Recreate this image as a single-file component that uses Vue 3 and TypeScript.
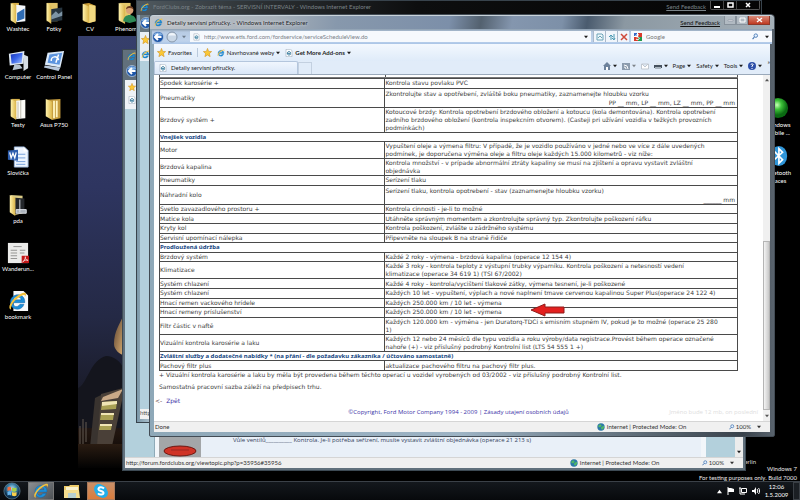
<script setup lang="ts">
interface Row {
  kind: 'single' | 'double' | 'measure' | 'triple' | 'section'
  name: string
  text?: string
  extra?: string
}

interface Shortcut {
  icon: string
  label: string
}

const rows: Row[] = [
  { kind: 'single', name: 'Spodek karosérie +', text: 'Kontrola stavu povlaku PVC' },
  {
    kind: 'measure',
    name: 'Pneumatiky',
    text: 'Zkontrolujte stav a opotřebení, zvláště boku pneumatiky, zaznamenejte hloubku vzorku',
    extra: 'PP __ mm, LP __ mm, LZ __ mm, PP __ mm',
  },
  {
    kind: 'triple',
    name: 'Brzdový systém +',
    text: 'Kotoucové brzdy: Kontrola opotrebení brzdového obložení a kotoucu (kola demontována). Kontrola opotrebení\nzadního brzdového obložení (kontrola inspekcním otvorem). (Casteji pri užívání vozidla v težkých provozních\npodmínkách)',
  },
  { kind: 'section', name: 'Vnejšek vozidla' },
  {
    kind: 'double',
    name: 'Motor',
    text: 'Vypuštení oleje a výmena filtru: V případě, že je vozidlo používáno v jedné nebo ve více z dále uvedených\npodmínek, je doporučena výměna oleje a filtru oleje každých 15.000 kilometrů - viz níže:',
  },
  {
    kind: 'double',
    name: 'Brzdová kapalina',
    text: 'Kontrola množství - v prípade abnormální ztráty kapaliny se musí na zjištení a opravu vystavit zvláštní\nobjednávka',
  },
  { kind: 'single', name: 'Pneumatiky', text: 'Serízení tlaku' },
  {
    kind: 'measure',
    name: 'Náhradní kolo',
    text: 'Serízení tlaku, kontrola opotrebení - stav (zaznamenejte hloubku vzorku)',
    extra: '______ mm',
  },
  { kind: 'single', name: 'Svetlo zavazadlového prostoru +', text: 'Kontrola cinnosti - je-li to možné' },
  { kind: 'single', name: 'Matice kola', text: 'Utáhněte správným momentem a zkontrolujte správný typ. Zkontrolujte poškození ráfku' },
  { kind: 'single', name: 'Kryty kol', text: 'Kontrola poškození, zvlášte u zádržného systému' },
  { kind: 'single', name: 'Servisní upomínací nálepka', text: 'Připevněte na sloupek B na straně řidiče' },
  { kind: 'section', name: 'Prodloužená údržba' },
  { kind: 'single', name: 'Brzdový systém', text: 'Každé 2 roky - výmena - brzdová kapalina (operace 12 154 4)' },
  {
    kind: 'double',
    name: 'Klimatizace',
    text: 'Každé 3 roky - kontrola teploty z výstupní trubky výparníku. Kontrola poškození a netesností vedení\nklimatizace (operace 34 619 1) (TSI 67/2002)',
  },
  { kind: 'single', name: 'Systém chlazení', text: 'Každé 4 roky - kontrola/vycištení tlakové zátky, výmena tesnení, je-li poškozené' },
  { kind: 'single', name: 'Systém chlazení', text: 'Každých 10 let - vypuštení, výplach a nové naplnení tmave cervenou kapalinou Super Plus(operace 24 122 4)' },
  { kind: 'single', name: 'Hnací remen vackového hrídele', text: 'Každých 250.000 km / 10 let - výmena' },
  { kind: 'single', name: 'Hnací remeny príslušenství', text: 'Každých 250.000 km / 10 let - výmena' },
  {
    kind: 'double',
    name: 'Filtr částic v naftě',
    text: 'Každých 120.000 km - výměna - jen Duratorq-TDCi s emisním stupněm IV, pokud je to možné (operace 25 280\n1)',
  },
  {
    kind: 'double',
    name: 'Vizuální kontrola karosérie a laku',
    text: 'Každých 12 nebo 24 měsíců dle typu vozidla a roku výroby/data registrace.Provést během operace označené\nnahoře (+) - viz příslušný podrobný Kontrolní list (LTS 54 555 1 +)',
  },
  { kind: 'section', name: 'Zvláštní služby a dodatečné nabídky * (na přání - dle požadavku zákazníka / účtováno samostatně)' },
  { kind: 'single', name: 'Pachový filtr plus', text: 'aktualizace pachového filtru na pachový filtr plus.' },
]

const shortcuts: Shortcut[][] = [
  [
    { icon: 'folder-doc', label: 'Washtec' },
    { icon: 'computer', label: 'Computer' },
    { icon: 'folder-paper', label: 'Testy' },
    { icon: 'word', label: 'Slovíčka' },
    { icon: 'folder-dark', label: 'pda' },
    { icon: 'pdf', label: 'Wanderun...' },
    { icon: 'iedoc', label: 'bookmark' },
  ],
  [
    { icon: 'folder-photo', label: 'Fotky' },
    { icon: 'panel', label: 'Control Panel' },
    { icon: 'folder-full', label: 'Asus P750' },
  ],
  [{ icon: 'folder', label: 'CV' }],
  [{ icon: 'folder-user', label: 'Phenom' }],
]

const menus: string[] = ['Page', 'Safety', 'Tools']
</script>

<template>
  <div class="desktop">
    <svg class="defs" width="0" height="0" aria-hidden="true">
      <defs>
        <linearGradient id="gFolder" x1="0" x2="1">
          <stop offset="0" stop-color="#fff3ad" />
          <stop offset="1" stop-color="#dbb54a" />
        </linearGradient>
        <linearGradient id="gScreen" x1="0" y1="0" x2="1" y2="1">
          <stop offset="0" stop-color="#1430b8" />
          <stop offset="0.5" stop-color="#3c68ea" />
          <stop offset="1" stop-color="#a9c8ff" />
        </linearGradient>
        <radialGradient id="gBall" cx="0.45" cy="0.35">
          <stop offset="0" stop-color="#c8ffb8" />
          <stop offset="0.45" stop-color="#3ec23a" />
          <stop offset="1" stop-color="#0a6a12" />
        </radialGradient>
        <radialGradient id="gOrb" cx="0.5" cy="0.35">
          <stop offset="0" stop-color="#b9e2f5" />
          <stop offset="0.55" stop-color="#3c7fa8" />
          <stop offset="1" stop-color="#0d2f4c" />
        </radialGradient>
      </defs>
      <symbol id="folder" viewBox="0 0 24 24">
        <path d="M5 2l6-1 7 3v17l-7 2-6-2z" fill="#c99c36" />
        <path d="M11 3l7 1v17l-7 2z" fill="#f1d981" />
        <path d="M4 2l7 3v18l-7-3z" fill="url(#gFolder)" />
      </symbol>
      <symbol id="folder-doc" viewBox="0 0 24 24">
        <path d="M5 1h8v20H5z" fill="#d8b24c" />
        <path d="M10 3l10 1v17l-10 1z" fill="#f5f8fc" />
        <path d="M11 12l8-5v11l-8 3z" fill="#2f6cb4" />
        <path d="M4 1l6 3v20l-6-4z" fill="url(#gFolder)" />
      </symbol>
      <symbol id="folder-photo" viewBox="0 0 24 24">
        <path d="M4 1h12v20H4z" fill="#e2c468" />
        <path d="M8 8l13-2v14L8 22z" fill="#26343f" />
        <path d="M9 15l5-5 3 3 4-3v5l-12 4z" fill="#7d94a5" />
        <path d="M4 1l5 3v20l-5-4z" fill="url(#gFolder)" />
      </symbol>
      <symbol id="folder-user" viewBox="0 0 24 24">
        <path d="M5 1h12v20H5z" fill="#e5c86b" />
        <path d="M4 1l7 3v20l-7-4z" fill="url(#gFolder)" />
        <circle cx="16" cy="9" r="4" fill="#dba277" />
        <path d="M12 8c0-5 8-5 8 0-3-2-5-2-8 0z" fill="#6b3d20" />
        <path d="M9 21c0-9 14-9 14 0l-7 2z" fill="#2f8a56" />
      </symbol>
      <symbol id="folder-paper" viewBox="0 0 24 24">
        <path d="M5 1h9v20H5z" fill="#d8b24c" />
        <path d="M10 3l10-1v20l-10 1z" fill="#fbfbf7" />
        <path d="M15 3v19M12 4v18" stroke="#b9b6a8" stroke-width="1" />
        <path d="M4 1l6 3v20l-6-4z" fill="url(#gFolder)" />
      </symbol>
      <symbol id="folder-full" viewBox="0 0 24 24">
        <path d="M4 2l15-1v21l-9 2z" fill="#c39a3d" />
        <path d="M12 3v19M15 3v18" stroke="#fff4c0" stroke-width="2" />
        <path d="M3 1l7 3v20l-7-4z" fill="url(#gFolder)" />
      </symbol>
      <symbol id="folder-dark" viewBox="0 0 24 24">
        <path d="M4 1l13 1v19l-8 2z" fill="#d9ca86" />
        <path d="M9 4l10 1v15l-10 2z" fill="#23262a" />
        <path d="M14 6v14M10 17h11v4H10z" stroke="#dfe4ea" fill="#aab1ba" />
        <path d="M3 1l6 3v20l-6-4z" fill="url(#gFolder)" />
      </symbol>
      <symbol id="computer" viewBox="0 0 24 24">
        <path d="M18 5l5 2v13l-5 3z" fill="#d5dde4" />
        <path d="M2 4l17-3-1 14-15 2z" fill="#dfe9f3" />
        <path d="M4 5l13-2-1 11-11 1z" fill="url(#gScreen)" />
        <path d="M8 16h6l3 4-11 2z" fill="#b5c3d1" />
      </symbol>
      <symbol id="panel" viewBox="0 0 24 24">
        <path d="M5 3l18-2-4 18-17-3z" fill="#dbe9f8" />
        <path d="M7 5l14-2-3 13-13-2z" fill="#5c94df" />
        <path d="M9 12a4 4 0 0 1 8-1M17 5l-3 9" stroke="#fff" stroke-width="1.6" fill="none" />
        <path d="M2 17l17 2-2 4-16-4z" fill="#b8c8dc" />
      </symbol>
      <symbol id="word" viewBox="0 0 24 24">
        <path d="M8 1h11l4 4v18H8z" fill="#edf5ff" stroke="#9bb6da" />
        <path d="M18 1v5h5z" fill="#fff" />
        <path d="M12 9h8M12 13h8M10 17h10M10 20h10" stroke="#6e9bd8" />
        <path d="M1 5l11-1v12L1 15z" fill="#2e5eae" />
        <path d="M3 7l1.500 6 2-5 2 5 1.500-6" stroke="#fff" stroke-width="1.400" fill="none" />
      </symbol>
      <symbol id="pdf" viewBox="0 0 24 24">
        <path d="M1 1h22v22H1z" fill="#ececea" />
        <path d="M7 5h9M4 9h7M14 9h6M4 12h7M14 12h5M4 15h7M4 18h7" stroke="#8d8d8b" />
        <path d="M16 15h8v8h-8z" fill="#c41818" />
        <path d="M17 22c3-3 3-5 3-6 0 3 1 4 3 4-3-1-4 0-6 2z" stroke="#fff" stroke-width="0.700" fill="none" />
      </symbol>
      <symbol id="ie" viewBox="0 0 24 24">
        <path d="M20 15.500h-5c-3 5-9 3-8.500-2H21C22 0 3 1 3 13c0 10 14 12 17 2.500zM7 10c1-5 9-5 9.500 0z" fill="#1d8fd8" stroke="#0c5da0" stroke-width="0.600" />
        <path d="M4 22C-2 21 5 8 15 3c8-4 9-1 6 4 1-4-1-4-6-1C8 10 3 17 4 22z" fill="#f3c13c" />
      </symbol>
      <symbol id="iedoc" viewBox="0 0 24 24">
        <path d="M7 1h11l5 5v17H7z" fill="#f7f9fb" />
        <use href="#ie" x="1" y="2" width="21" height="21" />
      </symbol>
      <symbol id="page-ie" viewBox="0 0 24 24">
        <path d="M3 1h14l4 4v18H3z" fill="#fff" stroke="#8b9aac" stroke-width="1.500" />
        <path d="M17 15c-2 5-10 4-10-2 0-7 10-7 10 0H7" stroke="#357a9c" stroke-width="3" fill="none" />
      </symbol>
      <symbol id="star" viewBox="0 0 24 24">
        <path d="M12 1l3 8 8 .5-6 5.500 2 8-7-4.500L5 23l2-8-6-5.500L9 9z" fill="#fbc935" stroke="#cf8e1c" stroke-width="1.500" />
      </symbol>
      <symbol id="globe" viewBox="0 0 24 24">
        <circle cx="12" cy="12" r="11" fill="#2b78a8" />
        <path d="M3 9l6-5 5 3-3 5-5 1zM13 12l7-4 2 5-6 7-4-3z" fill="#4fb766" />
      </symbol>
      <symbol id="lens" viewBox="0 0 24 24">
        <circle cx="13" cy="9" r="6" fill="#e4f1ff" stroke="#4777b2" stroke-width="3" />
        <path d="M8 14l-6 7" stroke="#4777b2" stroke-width="4" />
      </symbol>
      <symbol id="caret" viewBox="0 0 6 6">
        <path d="M0 1h6L3 5z" fill="currentColor" />
      </symbol>
      <symbol id="arrow-back" viewBox="0 0 24 24">
        <circle cx="12" cy="12" r="11" fill="#1d56a8" stroke="#b9cee6" stroke-width="1.500" />
        <path d="M3 8a10 10 0 0 1 18 0c-6 3-12 3-18 0z" fill="#7faee0" />
        <path d="M19 12H7M12 6l-6 6 6 6" stroke="#fff" stroke-width="4" fill="none" />
      </symbol>
    </svg>

    <svg class="wallpaper" viewBox="0 0 60 432" preserveAspectRatio="none" aria-hidden="true">
      <defs>
        <linearGradient id="gSky" x1="0" y1="0" x2="0" y2="1">
          <stop offset="0" stop-color="#363f6b" />
          <stop offset="0.35" stop-color="#2e3560" />
          <stop offset="0.65" stop-color="#242945" />
          <stop offset="0.85" stop-color="#191a26" />
          <stop offset="0.92" stop-color="#21150f" />
          <stop offset="1" stop-color="#020202" />
        </linearGradient>
        <linearGradient id="gLamp" x1="0" y1="0" x2="1" y2="1">
          <stop offset="0" stop-color="#5b4230" />
          <stop offset="1" stop-color="#d5aa70" />
        </linearGradient>
        <linearGradient id="gGround" x1="0" y1="0" x2="0" y2="1">
          <stop offset="0" stop-color="#2a1c12" />
          <stop offset="1" stop-color="#020202" />
        </linearGradient>
      </defs>
      <path d="M0 0h60v432H0z" fill="url(#gSky)" />
      <path d="M0 352c9-3 12-28 28-32 8 0 15 6 17 12v60H0z" fill="#14151d" />
      <path d="M45 280c-3 8-9 15-9 28 0 6 6 10 9 11z" fill="url(#gLamp)" />
      <path d="M17 362l6-3 2 32 0 20H12z" fill="#39332f" />
      <path d="M23 358l22-6v8l-11 50H19z" fill="#4a4038" />
      <path d="M25 361l20-8-5 9-17 3z" fill="#c9a987" />
      <path d="M24 366l15-1-1 8-15 1zM23 377l13 0-1 7H22zM22 388l12 0-1 6H21z" fill="#a9a054" />
      <path d="M24 366l15-1v3l-15 2zM23 377h13v2H23zM22 388h12v2H22z" fill="#f0e5b5" />
      <path d="M2 390v18M5 383v25M8 386v20" stroke="#625b53" stroke-width="1" />
      <path d="M0 408h60v24H0z" fill="url(#gGround)" />
    </svg>

    <nav class="shortcuts" aria-label="Desktop">
      <div v-for="(column, c) in shortcuts" :key="c" class="shortcut-column">
        <button v-for="s in column" :key="s.label" class="shortcut" type="button">
          <svg width="24" height="22"><use :href="'#' + s.icon" /></svg>
          <span>{{ s.label }}</span>
        </button>
      </div>
    </nav>

    <div class="side-shortcuts">
      <button class="shortcut" type="button">
        <svg width="22" height="24" viewBox="0 0 24 24"><circle cx="12" cy="12" r="11" fill="url(#gBall)" /></svg>
        <span>Windows<br />Mobile ...</span>
      </button>
      <button class="shortcut" type="button">
        <svg width="22" height="24" viewBox="0 0 24 24">
          <ellipse cx="13" cy="12" rx="9" ry="11" fill="#2f95d8" />
          <path d="M8 7l9 9-4 4V4l4 4-9 8" stroke="#fff" stroke-width="1.800" fill="none" />
        </svg>
        <span>Bluetooth<br />Places</span>
      </button>
    </div>

    <span class="covered-label">Berlin</span>

    <section class="window forum" aria-label="Forum">
      <div class="forum-title"><svg width="9" height="9"><use href="#ie" /></svg></div>
      <div class="forum-nav"><svg width="12" height="12"><use href="#arrow-back" /></svg></div>
      <div class="forum-tools">
        <svg width="8" height="8"><use href="#star" /></svg>
        <svg width="8" height="8"><use href="#page-ie" /></svg>
      </div>
      <div class="forum-body">
        <div class="forum-margin"></div>
        <div class="forum-avatar">
          <svg width="34" height="12" viewBox="0 0 34 12">
            <ellipse cx="17" cy="6" rx="16" ry="5" fill="#cf3326" stroke="#6d1812" />
            <path d="M8 5h18" stroke="#b52d24" stroke-width="2" />
          </svg>
        </div>
        <div class="forum-post">
          <p>Vůle ventilů__________ Kontrola. Je-li potřeba seřízení, musíte vystavit zvláštní objednávka (operace 21 213 s)</p>
        </div>
        <div class="forum-gutter"></div>
        <div class="forum-scroll"><svg width="4" height="4"><use href="#caret" /></svg></div>
      </div>
      <footer class="status">
        <span class="grow">http://forum.fordclubs.org/viewtopic.php?p=35956#35956</span>
        <span class="zone"><svg width="8" height="8"><use href="#globe" /></svg>Internet | Protected Mode: On</span>
        <span class="zoom"><svg width="6" height="6"><use href="#lens" /></svg>100%<svg class="drop" width="4" height="4"><use href="#caret" /></svg></span>
      </footer>
    </section>

    <section class="window clubs" aria-label="FordClubs">
      <header class="clubs-title">
        <svg width="9" height="9"><use href="#ie" /></svg>
        <span class="grow">FordClubs.org - Zobrazit téma - SERVISNÍ INTERVALY - Windows Internet Explorer</span>
        <a href="#">Send Feedback</a>
        <div class="clubs-buttons">
          <button type="button" aria-label="Minimize"><svg width="8" height="8" viewBox="0 0 8 8"><path d="M1 5h6v2H1z" fill="#fff" /></svg></button>
          <button type="button" aria-label="Maximize"><svg width="8" height="8" viewBox="0 0 8 8"><path d="M2 2h5v4H2z" fill="none" stroke="#fff" stroke-width="1.500" /></svg></button>
          <button type="button" aria-label="Close" class="wide"><svg width="8" height="8" viewBox="0 0 8 8"><path d="M2 2l4 4M6 2L2 6" stroke="#fff" stroke-width="1.500" /></svg></button>
        </div>
      </header>
      <div class="clubs-nav"><svg width="12" height="12"><use href="#arrow-back" /></svg></div>
      <div class="clubs-tools">
        <svg width="9" height="9"><use href="#star" /></svg>
        <svg width="9" height="9"><use href="#ie" /></svg>
      </div>
      <div class="clubs-body"></div>
      <footer class="clubs-status">http://</footer>
    </section>

    <section class="window main" aria-label="Detaily servisní příručky">
      <header class="titlebar">
        <svg width="9" height="9"><use href="#ie" /></svg>
        <h1 class="grow">Detaily servisní příručky. - Windows Internet Explorer</h1>
        <a href="#">Send Feedback</a>
        <div class="caption">
          <button type="button" aria-label="Minimize"><svg width="7" height="6" viewBox="0 0 7 6"><path d="M1 3h5v1H1z" fill="#fff" stroke="#7c8794" stroke-width="0.500" /></svg></button>
          <button type="button" aria-label="Maximize"><svg width="7" height="6" viewBox="0 0 7 6"><path d="M1 1h5v4H1z" fill="none" stroke="#fff" /></svg></button>
          <button type="button" aria-label="Close" class="close"><svg width="7" height="6" viewBox="0 0 7 6"><path d="M1 1l5 4M6 1L1 5" stroke="#fff" stroke-width="1.400" /></svg></button>
        </div>
      </header>

      <div class="nav">
        <button type="button" class="round" aria-label="Back"><svg width="12" height="12"><use href="#arrow-back" /></svg></button>
        <button type="button" class="round" aria-label="Forward">
          <svg width="12" height="12" viewBox="0 0 24 24"><circle cx="12" cy="12" r="10" fill="#c9d7e6" stroke="#8797aa" stroke-width="2" /><path d="M4 9a9 9 0 0 1 16 0z" fill="#f1f6fb" /></svg>
        </button>
        <svg class="recent" width="4" height="4"><use href="#caret" /></svg>
        <div class="address">
          <svg width="7" height="8"><use href="#page-ie" /></svg>
          <input type="text" aria-label="Address" value="http://www.etis.ford.com/fordservice/serviceScheduleView.do" />
          <svg width="4" height="4"><use href="#caret" /></svg>
        </div>
        <div class="nav-actions">
          <button type="button" aria-label="Compatibility view"><svg width="8" height="8" viewBox="0 0 8 8"><path d="M1 1h5l1 1v5H1z" fill="#eef7fb" stroke="#6da4b8" /><path d="M2 5l2-2 2 2" stroke="#6da4b8" fill="none" /></svg></button>
          <button type="button" aria-label="Refresh"><svg width="8" height="8" viewBox="0 0 8 8"><path d="M3 7V2M1 4l2-2 2 2M6 1v5M4 5l2 2 1-2" stroke="#4a99b2" fill="none" /></svg></button>
          <button type="button" aria-label="Stop"><svg width="8" height="8" viewBox="0 0 8 8"><path d="M1 1l6 6M7 1L1 7" stroke="#ce4a3b" stroke-width="1.500" /></svg></button>
        </div>
        <div class="search">
          <svg width="8" height="8" viewBox="0 0 8 8"><path d="M0 0h8v8H0z" fill="#fff" /><path d="M0 0h3v3H0z" fill="#3568c8" /><path d="M4 0h4v4H4z" fill="#d93a2b" /><path d="M0 4h4v4H0z" fill="#d93a2b" /><path d="M4 4h4v4H4z" fill="#219a4e" /><path d="M5 2c-4-2-4 3-1 2 3 1 0 4-2 2" stroke="#fff" fill="none" /></svg>
          <input type="text" aria-label="Search" placeholder="Google" />
          <button type="button" aria-label="Search Google"><svg width="7" height="7"><use href="#lens" /></svg></button>
          <svg width="4" height="4"><use href="#caret" /></svg>
        </div>
      </div>

      <div class="favorites">
        <button type="button"><svg width="9" height="9"><use href="#star" /></svg>Favorites</button>
        <span class="divider"></span>
        <button type="button" aria-label="Add to favorites"><svg width="9" height="9"><use href="#star" /></svg></button>
        <a href="#"><svg width="8" height="8"><use href="#ie" /></svg>Navrhované weby <svg width="4" height="4"><use href="#caret" /></svg></a>
        <a href="#" class="strong"><svg width="8" height="8"><use href="#page-ie" /></svg>Get More Add-ons <svg width="4" height="4"><use href="#caret" /></svg></a>
      </div>

      <div class="tabs">
        <button type="button" class="tab"><svg width="8" height="8"><use href="#page-ie" /></svg>Detaily servisní příručky.</button>
        <button type="button" class="new-tab" aria-label="New tab"></button>
        <div class="commands">
          <button type="button" aria-label="Home"><svg width="8" height="8" viewBox="0 0 8 8"><path d="M0 4l4-4 4 4H7v4H1V4z" fill="#6d829c" /><path d="M3 5h2v3H3z" fill="#fff" /></svg><svg width="4" height="4"><use href="#caret" /></svg></button>
          <button type="button" aria-label="Feeds"><svg width="8" height="8" viewBox="0 0 8 8"><path d="M0 1h8v7H0z" fill="#8c9cae" /><path d="M2 3a4 4 0 0 1 4 4M2 5a2 2 0 0 1 2 2" stroke="#fff" fill="none" /></svg><svg class="faint" width="4" height="4"><use href="#caret" /></svg></button>
          <button type="button" aria-label="Mail"><svg width="8" height="8" viewBox="0 0 8 8"><path d="M0.500 2h7v5h-7zM1 2l3 3 3-3" fill="#fff" stroke="#c1c8d0" /></svg></button>
          <button type="button" aria-label="Print"><svg width="8" height="8" viewBox="0 0 8 8"><path d="M2 1h4v2H2z" fill="#dce4ec" /><path d="M0 3h8v3H0z" fill="#46525f" /><path d="M1 5h6v2H1z" fill="#a9b4bf" /></svg><svg width="4" height="4"><use href="#caret" /></svg></button>
          <button v-for="m in menus" :key="m" type="button">{{ m }}<svg width="4" height="4"><use href="#caret" /></svg></button>
          <button type="button" aria-label="Help"><svg width="8" height="8" viewBox="0 0 8 8"><circle cx="4" cy="4" r="4" fill="#2d4fa8" /><path d="M3 3c0-2 3-1 2 0L4 4v1M4 6v1" stroke="#fff" fill="none" /></svg><svg width="4" height="4"><use href="#caret" /></svg></button>
          <span class="more">»</span>
        </div>
      </div>

      <div class="viewport">
        <article class="page">
          <div class="cut-row" aria-hidden="true"><span></span><span></span></div>
          <div class="table-area">
            <table>
              <colgroup><col class="name-col" /><col /></colgroup>
              <tbody>
                <tr v-for="(row, i) in rows" :key="i" :class="row.kind">
                  <th v-if="row.kind === 'section'" colspan="2">{{ row.name }}</th>
                  <template v-else>
                    <td>{{ row.name }}</td>
                    <td>
                      {{ row.text }}
                      <div v-if="row.extra" class="extra">{{ row.extra }}</div>
                    </td>
                  </template>
                </tr>
              </tbody>
            </table>
          </div>
          <p class="note">+ Vizuální kontrola karosérie a laku by měla být provedena během těchto operací u vozidel vyrobených od 03/2002 - viz příslušný podrobný Kontrolní list.</p>
          <p class="note rate">Samostatná pracovní sazba záleží na předpisech trhu.</p>
          <p class="back"><span>&lt;-</span><a href="#">Zpět</a></p>
          <footer class="copyright">
            <span><a href="#">©Copyright, Ford Motor Company 1994 - 2009</a> | <a href="#">Zásady utajení osobních údajů</a></span>
            <span class="faded">Jméno bude 12 mb, on poslední</span>
          </footer>
          <svg class="pointer" width="36" height="14" viewBox="0 0 36 14" aria-hidden="true">
            <path d="M1 7l14-6v3h19v6H15v3z" fill="#e3201f" stroke="#8f1d1b" />
          </svg>
        </article>
        <div class="scrollbar">
          <svg width="4" height="4" viewBox="0 0 6 6"><path d="M0 5h6L3 1z" fill="#555" /></svg>
          <span class="thumb"></span>
          <svg width="4" height="4"><use href="#caret" /></svg>
        </div>
      </div>

      <footer class="status">
        <span class="grow">Done</span>
        <span class="zone"><svg width="8" height="8"><use href="#globe" /></svg>Internet | Protected Mode: On</span>
        <span class="zoom"><svg width="6" height="6"><use href="#lens" /></svg>100%<svg class="drop" width="4" height="4"><use href="#caret" /></svg></span>
      </footer>
    </section>

    <p class="watermark">Windows 7<br />For testing purposes only. Build 7000</p>

    <footer class="taskbar">
      <button type="button" class="start" aria-label="Start">
        <svg width="20" height="18" viewBox="0 0 20 20">
          <circle cx="10" cy="10" r="9" fill="url(#gOrb)" stroke="#7fa3b8" stroke-width="0.600" />
          <path d="M5 6c2-1 3-1 4 0v4c-1-1-2-1-4 0z" fill="#f26a3b" />
          <path d="M10 6c2 1 3 1 5 0v4c-2 1-3 1-5 0z" fill="#a4d04b" />
          <path d="M5 11c2-1 3-1 4 0v4c-1-1-2-1-4 0z" fill="#66b6f0" />
          <path d="M10 11c2 1 3 1 5 0v4c-2 1-3 1-5 0z" fill="#fbd04a" />
        </svg>
      </button>
      <button type="button" class="task active" aria-label="Internet Explorer"><svg width="16" height="16"><use href="#ie" /></svg></button>
      <button type="button" class="task" aria-label="Explorer">
        <svg width="18" height="15" viewBox="0 0 18 15"><path d="M1 2h5l1-1h9v13H1z" fill="#eccb6b" /><path d="M3 3h12v6H3z" fill="#f9f2cf" /><path d="M1 6h15l1 8H1z" fill="#f4dd8f" /><path d="M5 9h8v5H5z" fill="#b7cfd0" /></svg>
      </button>
      <button type="button" class="task skype" aria-label="Skype">
        <svg width="16" height="16" viewBox="0 0 16 16"><circle cx="6" cy="6" r="5" fill="#22aeea" /><circle cx="10" cy="10" r="5" fill="#22aeea" /><circle cx="8" cy="8" r="6" fill="#22aeea" /><path d="M11 5.500C9 3.500 5 4 5.500 6.500 6 8.500 10.500 7.500 10.500 10c0 2-4 2-5.500 0.300" stroke="#fff" stroke-width="2" fill="none" /></svg>
      </button>
      <div class="tray">
        <svg width="5" height="5" viewBox="0 0 6 6"><path d="M0 5h6L3 1z" fill="#fff" /></svg>
        <svg width="7" height="8" viewBox="0 0 7 8"><path d="M1 0v8" stroke="#fff" stroke-width="1" /><path d="M1 1h3l3 1v3H1z" fill="#fff" /></svg>
        <svg width="8" height="8" viewBox="0 0 8 8"><path d="M2.500 1.500h5v4h-5zM0 1h2M1 1v6h5" stroke="#fff" fill="none" /></svg>
        <svg width="8" height="8" viewBox="0 0 8 8"><path d="M0 3h2l2-3v8L2 5H0z" fill="#fff" /><path d="M5 2c1 1 1 3 0 4M6.500 1c1.500 2 1.500 4 0 6" stroke="#fff" fill="none" /></svg>
      </div>
      <div class="clock">12:06<br />1.5.2009</div>
      <button type="button" class="show-desktop" aria-label="Show desktop"></button>
    </footer>
  </div>
</template>

<style>
body {
  background: #000;
}
</style>

<style scoped>
.desktop {
  position: relative;
  height: 100vh;
  min-height: 500px;
  overflow: hidden;
  background: #000;
  color: #1c1c1c;
  font: 6px/8px Lato, 'Noto Sans', sans-serif;
}
.desktop * {
  box-sizing: border-box;
}
.desktop svg {
  flex: none;
}
.defs {
  position: absolute;
}
button {
  display: flex;
  align-items: center;
  justify-content: center;
  margin: 0;
  padding: 0;
  border: 0;
  background: none;
  color: inherit;
  font: inherit;
}
a {
  color: inherit;
  text-decoration: none;
}
p,
h1 {
  margin: 0;
}
input {
  min-width: 0;
  flex: 1;
  padding: 0;
  border: 0;
  outline: 0;
  background: transparent;
  color: #7b8189;
  font: inherit;
}
input::placeholder {
  color: #777;
  opacity: 1;
}
.grow {
  flex: 1;
}
.wallpaper {
  position: absolute;
  left: 78px;
  top: 36px;
  width: 60px;
  height: 432px;
}
.shortcuts {
  display: flex;
  padding-top: 2px;
}
.shortcut-column {
  display: flex;
  flex-direction: column;
  width: 36px;
}
.shortcut {
  flex-direction: column;
  justify-content: flex-start;
  height: 48px;
  gap: 1px;
  color: #fff;
  white-space: nowrap;
}
.side-shortcuts {
  position: absolute;
  right: 4px;
  top: 96px;
  display: flex;
  flex-direction: column;
  width: 36px;
}
.covered-label {
  position: absolute;
  right: 44px;
  top: 458px;
  color: #ddd;
}
.window {
  position: absolute;
  display: flex;
  flex-direction: column;
}

/* Forum window, furthest back */
.forum {
  left: 122px;
  right: 54px;
  top: 49px;
  bottom: 29px;
  padding: 0 2px 2px;
  border: 1px solid #3d4a54;
  background: #61707c;
}
.forum-title {
  height: 14px;
  padding: 2px;
}
.forum-nav {
  height: 16px;
  padding: 1px;
}
.forum-tools {
  display: flex;
  flex-direction: column;
  gap: 5px;
  height: 29px;
  padding: 3px;
  background: #eef2f6;
}
.forum-body {
  display: flex;
  flex: 1;
  min-height: 0;
  background: #b3d0dc;
}
.forum-margin {
  width: 30px;
  border-right: 1px solid #8eaab8;
}
.forum-avatar {
  display: flex;
  align-items: flex-end;
  justify-content: center;
  width: 46px;
  border-left: 4px solid #f2f6fa;
  background: #a3a6a8;
}
.forum-post {
  display: flex;
  flex: 1;
  flex-direction: column;
  justify-content: flex-end;
  padding: 0 0 13px 32px;
  background: #e9f0f8;
  color: #33425c;
  font: 6px/8px 'Open Sans', 'Noto Sans', sans-serif;
  white-space: nowrap;
}
.forum-gutter {
  width: 34px;
  border-left: 5px solid #f2f6fa;
}
.forum-scroll {
  display: flex;
  align-items: flex-end;
  justify-content: center;
  width: 8px;
  padding-bottom: 3px;
  background: #ececec;
}

/* Club window behind the active one */
.clubs {
  left: 136px;
  right: 38px;
  top: 0;
  bottom: 77px;
  padding: 0 3px 3px;
  border: 1px solid #38434c;
  background: linear-gradient(90deg, #7b97a8, #a9c0cd 2%, #30383f 96%);
}
.clubs-title {
  display: flex;
  align-items: center;
  height: 14px;
  margin: 0 -3px;
  padding: 0 1px 2px 3px;
  gap: 4px;
  background: linear-gradient(90deg, #505a60, #2b2f32 20%, #0d0e0f 45%, #050505);
  color: #7a8388;
}
.clubs-title a {
  text-decoration: underline;
}
.clubs-buttons {
  display: flex;
  align-self: flex-start;
  height: 9px;
  border: 1px solid #555;
  border-top: 0;
  border-radius: 0 0 2px 2px;
}
.clubs-buttons button {
  width: 13px;
  border-right: 1px solid #444;
}
.clubs-buttons .wide {
  width: 22px;
  border: 0;
}
.clubs-nav {
  height: 17px;
  padding-top: 2px;
  background: #68767f;
}
.clubs-tools {
  display: flex;
  flex-direction: column;
  gap: 6px;
  height: 29px;
  padding: 3px 1px;
  background: #e9eff5;
}
.clubs-body {
  flex: 1;
  background: #b3cfdc;
}
.clubs-status {
  height: 10px;
  background: #f1f1f1;
  color: #555;
}

/* Active window */
.main {
  left: 149px;
  right: 25px;
  top: 14px;
  bottom: 63px;
  padding: 0 4px 4px;
  border: 1px solid #434c55;
  border-radius: 4px 4px 2px 2px;
  background: linear-gradient(90deg, #8ea8b8, #9db3c4 50%, #38414a 95%, #59636d);
}
.titlebar {
  display: flex;
  align-items: center;
  height: 14px;
  margin: 0 -4px;
  padding: 0 4px;
  gap: 4px;
  border-top: 1px solid #c9d3da;
  border-radius: 4px 4px 0 0;
  background: linear-gradient(100deg, #bfc4c9, #a7b0b9 20%, #8798ac 30%, #7c8fa9 48%, #53616f 53%, #8496ae 58%, #7d90a8 66%, #4a5b6e 70%, #8b98a2 76%, #a5b0b8);
}
.titlebar h1 {
  color: #1b2126;
  font: inherit;
  text-shadow: 0 0 3px #fff;
}
.titlebar a {
  color: #111;
  text-decoration: underline;
}
.caption {
  display: flex;
  align-self: flex-start;
  height: 9px;
}
.caption button {
  width: 12px;
  border: 1px solid #87919b;
  border-top: 0;
  background: #b1bac2;
}
.caption .close {
  width: 22px;
  border-color: #8e392a;
  background: linear-gradient(#d98b7a, #c03a22);
}
.nav {
  display: flex;
  align-items: center;
  height: 15px;
  margin: 0 -2px;
  gap: 2px;
  background: linear-gradient(#8c9dad, #b7cbe3 20%, #bfd3ec 80%, #a9c4e6);
}
.nav .recent {
  margin: 0 2px;
  color: #6d7c8b;
}
.address {
  display: flex;
  flex: 1;
  align-items: center;
  height: 11px;
  padding: 0 3px;
  gap: 4px;
  background: #f6f9fd;
}
.nav-actions {
  display: flex;
  height: 11px;
}
.nav-actions button {
  width: 12px;
  border-left: 1px solid #a9b9cb;
  background: #f0f5fb;
}
.search {
  display: flex;
  align-items: center;
  width: 141px;
  height: 11px;
  padding: 0 3px;
  gap: 4px;
  background: #f6f9fd;
}
.search button {
  margin-right: 2px;
}
.favorites {
  display: flex;
  align-items: center;
  height: 17px;
  padding: 0 3px;
  gap: 5px;
  background: linear-gradient(#f3f8fe, #dfebf9);
}
.favorites button,
.favorites a {
  display: flex;
  align-items: center;
  gap: 2px;
}
.favorites .divider {
  width: 1px;
  height: 9px;
  background: #b9c9dc;
}
.favorites .strong {
  font-weight: 700;
}
.tabs {
  display: flex;
  align-items: flex-end;
  height: 14px;
  border-bottom: 1px solid #9aa9ba;
  background: #e1ecf9;
}
.tab {
  justify-content: flex-start;
  width: 144px;
  height: 13px;
  padding: 0 4px;
  gap: 4px;
  border: 1px solid #b4c6dd;
  border-bottom: 0;
  border-radius: 2px 2px 0 0;
  background: linear-gradient(#f0f6fe, #dae7f8);
}
.new-tab {
  width: 14px;
  height: 12px;
  border: 1px solid #c3d0e0;
  border-bottom: 0;
}
.commands {
  display: flex;
  align-items: center;
  height: 16px;
  margin-left: auto;
  gap: 5px;
}
.commands button {
  gap: 2px;
}
.commands .faint {
  opacity: 0.500;
}
.commands .more {
  align-self: flex-start;
}
.viewport {
  display: flex;
  flex: 1;
  min-height: 0;
  background: #fff;
}
.page {
  position: relative;
  display: flex;
  flex: 1;
  flex-direction: column;
  padding: 0 5px;
  color: #3c3c3c;
  font: 6px/8px 'DejaVu Sans', Verdana, sans-serif;
}
.cut-row {
  display: flex;
  height: 3px;
  margin-right: 20px;
  border-bottom: 1px solid #777;
}
.cut-row span {
  width: 39%;
  border-left: 1px solid #555;
}
.cut-row span:last-child {
  flex: 1;
  border-right: 1px solid #555;
}
.table-area {
  flex: 1;
  min-height: 0;
  margin-right: 20px;
}
table {
  width: 100%;
  height: 100%;
  table-layout: fixed;
  border-collapse: collapse;
}
.name-col {
  width: 39%;
}
td,
th {
  padding: 0;
  border: 1px solid #4a4a4a;
  text-align: left;
  white-space: pre-line;
  line-height: 8px;
}
th {
  color: #14457f;
  font-family: 'Noto Sans', 'Open Sans', sans-serif;
  font-weight: 700;
}
.double {
  height: 17px;
}
.measure {
  height: 19px;
}
.measure td {
  line-height: 9px;
}
.triple {
  height: 25px;
}
.extra {
  padding-right: 2px;
  text-align: right;
}
.note {
  white-space: nowrap;
}
.rate {
  margin-top: 4px;
}
.back {
  display: flex;
  margin: 6px 0 3px -4px;
  gap: 4px;
  color: #5b3d3d;
}
.back a,
.copyright a {
  color: #3b33a8;
}
.copyright {
  display: grid;
  grid-template-columns: 1fr auto 1fr;
  padding-bottom: 5px;
  color: #3b33a8;
  font-family: 'Open Sans', 'Noto Sans', sans-serif;
  white-space: nowrap;
}
.copyright span:first-child {
  grid-column: 2;
}
.faded {
  justify-self: end;
  color: #dedede;
}
.pointer {
  position: absolute;
  left: 376px;
  top: 228px;
}
.scrollbar {
  display: flex;
  flex-direction: column;
  align-items: center;
  width: 7px;
  padding: 3px 0;
  background: #f0f0f0;
  color: #555;
}
.thumb {
  flex: 1;
  width: 7px;
  margin: 159px 0 4px;
  border: 1px solid #b5b5b5;
  background: linear-gradient(90deg, #f4f4f4, #c9c9c9);
}
.status {
  display: flex;
  align-items: center;
  height: 11px;
  padding: 0 9px 0 1px;
  border-top: 1px solid #d5d5d5;
  background: #f0f0f0;
  color: #333;
}
.zone {
  display: flex;
  align-items: center;
  width: 132px;
  gap: 2px;
}
.zoom {
  display: flex;
  align-items: center;
  gap: 1px;
}
.zoom .drop {
  margin-left: 5px;
}
.watermark {
  position: absolute;
  right: 3px;
  bottom: 18px;
  color: #e8e8e8;
  line-height: 9px;
  text-align: right;
}
.taskbar {
  position: absolute;
  left: 0;
  right: 0;
  bottom: 0;
  display: flex;
  align-items: center;
  height: 19px;
  border-top: 1px solid #3b4148;
  background: linear-gradient(#14181d, #07090c);
  color: #fff;
}
.start {
  width: 28px;
  padding-right: 4px;
}
.task {
  width: 29px;
  height: 18px;
}
.active {
  width: 26px;
  margin-right: 3px;
  border: 1px solid #777;
  background: linear-gradient(135deg, #8a8e92, #4d5155);
}
.skype {
  width: 28px;
  margin-left: 1px;
  border: 1px solid #a97a5c;
  background: linear-gradient(#c99069, #d97c3d);
}
.tray {
  display: flex;
  align-items: center;
  margin-left: auto;
  gap: 5px;
}
.clock {
  width: 33px;
  text-align: center;
}
.show-desktop {
  width: 7px;
  height: 18px;
  border: 1px solid #3a3f45;
  background: #1b1f24;
}
</style>
